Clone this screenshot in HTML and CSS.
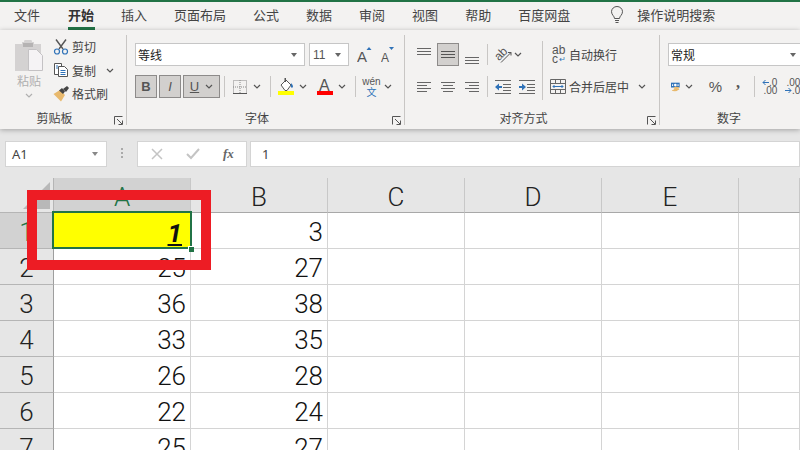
FILE: index.html
```html
<!DOCTYPE html>
<html lang="zh-CN">
<head>
<meta charset="utf-8">
<title>Excel</title>
<link rel="stylesheet" href="styles.css">
</head>
<body>
<div class="app">
  <nav class="tabs">
    <span class="first">文件</span><span class="active">开始</span><span>插入</span><span>页面布局</span><span>公式</span><span>数据</span><span>审阅</span><span>视图</span><span>帮助</span><span>百度网盘</span>
    <svg class="bulb" width="14" height="18" viewBox="0 0 14 18" fill="none" stroke="#555"><path d="M4.5 12.5C4.5 10 1.5 9 1.500 5.700A5.500 5.200 0 0 1 12.500 5.700C12.500 9 9.500 10 9.500 12.500Z"/><path d="M5 14.500H9M5.500 16.500H8.500"/></svg>
    <span class="search">操作说明搜索</span>
  </nav>

  <section class="ribbon">
    <div class="group clip">
      <div class="clip-tools">
        <div class="paste">
          <svg width="30" height="32" viewBox="0 0 30 32"><path fill="#d4d2d2" d="M1 4h7V2h2a4 3 0 0 1 8 0h2v2h7v27H1z"/><path fill="#b5b3b3" d="M9 3h10v4H9z"/><path fill="#f5f3f5" stroke="#c4c2c4" d="M15.500 12.500h8l6 6v15h-14z" transform="translate(-1 -3)"/></svg>
          <span class="paste-label">粘贴</span>
          <svg class="chev" width="8" height="5" viewBox="0 0 8 5" fill="none" stroke="#b0b0b0" stroke-width="1.200"><path d="M1 1l3 3 3-3"/></svg>
        </div>
        <div class="clip-list">
          <div class="clip-item">
            <svg width="16" height="16" viewBox="0 0 16 16" fill="none"><path d="M3 0.500L10 10M13 0.500L6 10" stroke="#555" stroke-width="1.400"/><circle cx="4" cy="12.500" r="2.500" stroke="#2f72b8" stroke-width="1.200"/><circle cx="12" cy="12.500" r="2.500" stroke="#2f72b8" stroke-width="1.200"/></svg>
            <span>剪切</span>
          </div>
          <div class="clip-item">
            <svg width="16" height="16" viewBox="0 0 16 16" fill="#fff" stroke="#555"><path d="M1.500 1.500h7v11h-7z"/><path d="M5.500 4.500h6l3 3v7h-9z"/><path d="M7.500 8.500h5M7.500 10.500h5M7.500 12.500h5M3 4h2M3 6h2" stroke="#2f72b8"/></svg>
            <span>复制</span>
            <svg class="chev copy-chev" width="8" height="5" viewBox="0 0 8 5" fill="none" stroke="#555" stroke-width="1.200"><path d="M1 1l3 3 3-3"/></svg>
          </div>
          <div class="clip-item">
            <svg width="16" height="16" viewBox="0 0 16 16"><path fill="#e8b96d" d="M0.500 8L7 4l5 5-4 6.500z"/><path fill="#444" d="M6 4.500l3-2.500 3 3.500-2 2.500zM10 3l4-3 2 2-3 4z"/></svg>
            <span>格式刷</span>
          </div>
        </div>
      </div>
      <div class="group-label">剪贴板</div>
      <svg class="launcher" width="9" height="9" viewBox="0 0 9 9" fill="none" stroke="#555"><path d="M0.500 8.500V0.500H8.500M3 3l5 5M4.500 8.500h4v-4"/></svg>
    </div>

    <div class="group font">
      <div class="tools">
        <div class="row">
          <div class="select font-name"><span>等线</span><i class="caret"></i></div>
          <div class="select font-size ml4"><span class="size-num">11</span><i class="caret"></i></div>
          <svg class="ml8" width="15" height="18" viewBox="0 0 15 18"><text class="glyph" x="0" y="16" font-size="15">A</text><path fill="#2f72b8" d="M9.500 4L12 1l2.500 3z"/></svg>
          <svg class="ml9" width="14" height="18" viewBox="0 0 14 18"><text class="glyph" x="0" y="16" font-size="12">A</text><path fill="#2f72b8" d="M8 1h5l-2.500 3z"/></svg>
        </div>
        <div class="row">
          <div class="toggle w22"><b>B</b></div>
          <div class="toggle w22 ml2"><em>I</em></div>
          <div class="toggle w37 ml2"><u>U</u><svg class="chev" width="8" height="5" viewBox="0 0 8 5" fill="none" stroke="#555" stroke-width="1.200"><path d="M1 1l3 3 3-3"/></svg></div>
          <i class="sep ml4"></i>
          <svg class="ml8" width="14" height="14" viewBox="0 0 14 14" fill="none" stroke="#888" stroke-dasharray="1 1"><path d="M0.500 0.500h13v13h-13zM7 0v13M0 7h13"/><path d="M0 13.500h14" stroke="#555" stroke-dasharray="none"/></svg>
          <svg class="chev ml6" width="8" height="5" viewBox="0 0 8 5" fill="none" stroke="#555" stroke-width="1.200"><path d="M1 1l3 3 3-3"/></svg>
          <i class="sep ml9"></i>
          <svg class="ml7" width="16" height="18" viewBox="0 0 16 18"><path fill="#fff" stroke="#555" d="M3 7l5-5 5 5-4 5.500H7z"/><path fill="#555" d="M6.500 0h1.500v4H6.500z"/><path fill="#2f72b8" d="M13 5c2 2 2.500 3.500 1.500 4.500S12 9 13 5z"/><path fill="#ff0" d="M0 13h16v4H0z"/></svg>
          <svg class="chev ml5" width="8" height="5" viewBox="0 0 8 5" fill="none" stroke="#555" stroke-width="1.200"><path d="M1 1l3 3 3-3"/></svg>
          <svg class="ml10" width="16" height="18" viewBox="0 0 16 18"><text class="glyph" x="2" y="13" font-size="16">A</text><path fill="#f00" d="M0 13h16v4H0z"/></svg>
          <svg class="chev ml5" width="8" height="5" viewBox="0 0 8 5" fill="none" stroke="#555" stroke-width="1.200"><path d="M1 1l3 3 3-3"/></svg>
          <i class="sep ml9"></i>
          <div class="wen ml7"><span class="wen-top">wén</span><span class="wen-bot">文</span></div>
          <svg class="chev ml4" width="8" height="5" viewBox="0 0 8 5" fill="none" stroke="#555" stroke-width="1.200"><path d="M1 1l3 3 3-3"/></svg>
        </div>
      </div>
      <div class="group-label">字体</div>
      <svg class="launcher" width="9" height="9" viewBox="0 0 9 9" fill="none" stroke="#555"><path d="M0.500 8.500V0.500H8.500M3 3l5 5M4.500 8.500h4v-4"/></svg>
    </div>

    <div class="group align">
      <div class="align-tools">
        <div class="tools align-left">
          <div class="row">
            <svg class="valign-top" width="14" height="8" viewBox="0 0 14 8" stroke="#666"><path d="M0 0.500h14M0 3.500h14M0 6.500h14" transform="translate(0 0)"/></svg>
            <div class="toggle w22 ml6"><svg width="14" height="8" viewBox="0 0 14 8" stroke="#555"><path d="M0 0.500h14M0 3.500h14M0 6.500h14"/></svg></div>
            <svg class="valign-bot ml6" width="14" height="8" viewBox="0 0 14 8" stroke="#666"><path d="M0 0.500h14M0 3.500h14M0 6.500h14"/></svg>
            <i class="sep ml8"></i>
            <svg class="ml7" width="17" height="18" viewBox="0 0 17 18" fill="none" stroke="#555"><text class="glyph-small" x="0" y="12" font-size="12" transform="rotate(-45 6 9)">ab</text><path d="M6 16.500L16 6.500M13 6.500h3v3" stroke="#555"/></svg>
            <svg class="chev ml2" width="8" height="5" viewBox="0 0 8 5" fill="none" stroke="#555" stroke-width="1.200"><path d="M1 1l3 3 3-3"/></svg>
          </div>
          <div class="row">
            <svg width="14" height="10" viewBox="0 0 14 10" stroke="#666"><path d="M0 0.500h14M0 3.500h10M0 6.500h14M0 9.500h10"/></svg>
            <svg class="ml10" width="14" height="10" viewBox="0 0 14 10" stroke="#666"><path d="M0 0.500h14M2 3.500h10M0 6.500h14M2 9.500h10"/></svg>
            <svg class="ml10" width="14" height="10" viewBox="0 0 14 10" stroke="#666"><path d="M0 0.500h14M4 3.500h10M0 6.500h14M4 9.500h10"/></svg>
            <i class="sep ml8"></i>
            <svg class="ml7" width="16" height="14" viewBox="0 0 16 14"><path stroke="#666" d="M0 0.500h16M8 4.500h8M8 7.500h8M8 10.500h8M0 13.500h16"/><path fill="#2f72b8" d="M0 7l4-3.500V6h3v2H4v2.500z"/></svg>
            <svg class="ml8" width="16" height="14" viewBox="0 0 16 14"><path stroke="#666" d="M0 0.500h16M8 4.500h8M8 7.500h8M8 10.500h8M0 13.500h16"/><path fill="#2f72b8" d="M7 7L3 3.500V6H0v2h3v2.500z"/></svg>
          </div>
        </div>
        <i class="sep-tall"></i>
        <div class="tools">
          <div class="row">
            <div class="wrap-icon ml9"><span>ab</span><span class="wrap-c">c<em class="wrap-arrow">↵</em></span></div>
            <span class="tool-text ml4">自动换行</span>
          </div>
          <div class="row">
            <svg class="ml7" width="16" height="15" viewBox="0 0 16 15" fill="none" stroke="#666"><path d="M0.500 0.500h15v14h-15zM0.500 4.500h15M0.500 10.500h15M5.500 0.500v4M10.500 0.500v4M5.500 10.500v4M10.500 10.500v4"/><path stroke="#2f72b8" d="M3 7.500h10M4.500 6L3 7.500 4.500 9M11.500 6L13 7.500 11.500 9"/></svg>
            <span class="tool-text ml3">合并后居中</span>
            <svg class="chev ml9" width="8" height="5" viewBox="0 0 8 5" fill="none" stroke="#555" stroke-width="1.200"><path d="M1 1l3 3 3-3"/></svg>
          </div>
        </div>
      </div>
      <div class="group-label">对齐方式</div>
      <svg class="launcher" width="9" height="9" viewBox="0 0 9 9" fill="none" stroke="#555"><path d="M0.500 8.500V0.500H8.500M3 3l5 5M4.500 8.500h4v-4"/></svg>
    </div>

    <div class="group number">
      <div class="tools">
        <div class="row">
          <div class="select number-format"><span>常规</span><i class="caret"></i></div>
        </div>
        <div class="row">
          <svg class="ml3" width="16" height="16" viewBox="0 0 16 16"><path fill="#2f72b8" d="M0 0h16v9H0z"/><circle cx="8" cy="4.500" r="2.500" fill="#fff"/><path fill="#fff" d="M2 3h2v3H2zM12 3h2v3h-2z"/><ellipse cx="10" cy="9.500" rx="5.500" ry="1.800" fill="#e8b96d"/><ellipse cx="10" cy="12" rx="5.500" ry="1.800" fill="#e8b96d"/><ellipse cx="7" cy="14.500" rx="5.500" ry="1.500" fill="#e8b96d"/></svg>
          <svg class="chev ml5" width="8" height="5" viewBox="0 0 8 5" fill="none" stroke="#555" stroke-width="1.200"><path d="M1 1l3 3 3-3"/></svg>
          <span class="percent">%</span>
          <span class="comma">,</span>
          <i class="sep ml14"></i>
          <div class="dec ml7"><svg width="7" height="7" viewBox="0 0 7 7"><path fill="none" stroke="#2f72b8" d="M7 3.500H1M3.500 1L1 3.500 3.500 6"/></svg><span class="dec-top">.0</span><span class="dec-wide">.00</span></div>
          <div class="dec ml8"><span class="dec-wide">.00</span><svg width="7" height="7" viewBox="0 0 7 7"><path fill="none" stroke="#2f72b8" d="M0 3.500H6M3.500 1L6 3.500 3.500 6"/></svg><span class="dec-top">.0</span></div>
        </div>
      </div>
      <div class="group-label">数字</div>
    </div>
  </section>

  <section class="formula">
    <div class="name-box"><span>A1</span><i class="caret-gray"></i></div>
    <div class="grip"></div>
    <div class="fx-box">
      <svg width="12" height="12" viewBox="0 0 12 12" fill="none" stroke="#c4c4c4" stroke-width="1.500"><path d="M1 1l10 10M11 1L1 11"/></svg>
      <svg width="14" height="12" viewBox="0 0 14 12" fill="none" stroke="#c4c4c4" stroke-width="2"><path d="M1 6l4 4 8-9"/></svg>
      <span class="fx">fx</span>
    </div>
    <div class="formula-input">1</div>
  </section>

  <section class="sheet">
    <div class="corner"><i class="corner-tri"></i></div>
    <div class="col-head picked">A</div>
    <div class="col-head">B</div>
    <div class="col-head">C</div>
    <div class="col-head">D</div>
    <div class="col-head">E</div>
    <div class="col-head"></div>

    <div class="row-head picked">1</div>
    <div class="cell active-cell"><span>1</span><i class="handle"></i></div>
    <div class="cell">3</div><div class="cell"></div><div class="cell"></div><div class="cell"></div><div class="cell"></div>

    <div class="row-head">2</div>
    <div class="cell">25</div><div class="cell">27</div><div class="cell"></div><div class="cell"></div><div class="cell"></div><div class="cell"></div>

    <div class="row-head">3</div>
    <div class="cell">36</div><div class="cell">38</div><div class="cell"></div><div class="cell"></div><div class="cell"></div><div class="cell"></div>

    <div class="row-head">4</div>
    <div class="cell">33</div><div class="cell">35</div><div class="cell"></div><div class="cell"></div><div class="cell"></div><div class="cell"></div>

    <div class="row-head">5</div>
    <div class="cell">26</div><div class="cell">28</div><div class="cell"></div><div class="cell"></div><div class="cell"></div><div class="cell"></div>

    <div class="row-head">6</div>
    <div class="cell">22</div><div class="cell">24</div><div class="cell"></div><div class="cell"></div><div class="cell"></div><div class="cell"></div>

    <div class="row-head">7</div>
    <div class="cell">25</div><div class="cell">27</div><div class="cell"></div><div class="cell"></div><div class="cell"></div><div class="cell"></div>

    <div class="red-frame"></div>
  </section>
</div>
</body>
</html>
```

FILE: styles.css
```css
* { box-sizing: border-box; }
html, body { margin: 0; padding: 0; }
body {
  width: 800px;
  height: 450px;
  overflow: hidden;
  background: #e6e6e6;
  font-family: "Noto Sans CJK SC", "Liberation Sans", sans-serif;
  color: #444;
}
.app { width: 800px; height: 450px; overflow: hidden; display: flex; flex-direction: column; }
i { display: block; font-style: normal; }

/* tabs */
.tabs {
  height: 30px;
  flex: none;
  background: #f3f2f1;
  border-top: 2px solid #217346;
  display: flex;
  align-items: center;
  gap: 27px;
  padding: 0 0 3px 14px;
  font-size: 13px;
  line-height: 18px;
  color: #444;
  white-space: nowrap;
}
.tabs span { position: relative; }
.tabs .first { margin-right: 1px; }
.tabs .active { font-weight: 700; color: #333; }
.tabs .active::after {
  content: "";
  position: absolute;
  left: 0;
  right: -1px;
  bottom: -6px;
  height: 3px;
  background: #217346;
}
.bulb { margin-left: 13px; flex: none; }
.search { margin-left: -14px; }

/* ribbon */
.ribbon {
  height: 99px;
  flex: none;
  background: #f3f2f1;
  display: flex;
  padding-top: 5px;
  box-shadow: 0 1px 5px rgba(0, 0, 0, .3);
  position: relative;
  z-index: 1;
}
.group {
  height: 90px;
  flex: none;
  position: relative;
  display: flex;
  flex-direction: column;
  border-right: 1px solid #c8c6c4;
}
.clip { width: 127px; }
.font { width: 278px; padding-left: 8px; }
.align { width: 255px; padding-left: 12px; }
.number { width: 140px; padding-left: 8px; border-right: 0; overflow: hidden; }
.group-label {
  position: absolute;
  left: 0;
  right: 0;
  top: 74px;
  padding-right: 17px;
  text-align: center;
  font-size: 12px;
  line-height: 18px;
  color: #444;
}
.number .group-label { padding-right: 2px; }
.launcher { position: absolute; right: 3px; bottom: 0; }

.clip-tools { display: flex; padding-left: 11px; height: 72px; }
.paste { width: 36px; display: flex; flex-direction: column; align-items: center; padding-top: 5px; }
.paste-label { font-size: 12px; line-height: 16px; color: #b0b0b0; margin-top: 1px; }
.paste .chev { margin-top: 4px; }
.clip-list { margin-left: 6px; display: flex; flex-direction: column; }
.clip-item { height: 23.500px; display: flex; align-items: center; gap: 3px; font-size: 12px; color: #444; white-space: nowrap; }
.copy-chev { margin-left: 7px; }

.tools { display: flex; flex-direction: column; gap: 9px; padding-top: 8px; }
.row { height: 23px; display: flex; align-items: center; flex: none; white-space: nowrap; }
.select {
  height: 23px;
  background: #fff;
  border: 1px solid #c6c6c6;
  display: flex;
  align-items: center;
  justify-content: space-between;
  padding: 0 4px 0 2px;
  font-size: 12px;
  color: #222;
  flex: none;
}
.font-name { width: 170px; }
.font-size { width: 40px; padding-left: 3px; }
.size-num { font-family: "Liberation Sans", sans-serif; color: #555; font-size: 12px; }
.number-format { width: 136px; }
.caret { width: 0; height: 0; border: 3.500px solid transparent; border-top: 4px solid #666; border-bottom: 0; margin-right: 3px; }
.glyph { font-family: "Liberation Sans", sans-serif; fill: #555; }
.glyph-small { font-family: "Liberation Sans", sans-serif; fill: #555; stroke: none; }
.toggle {
  height: 23px;
  background: #d2d0ce;
  border: 1px solid #8d8b8a;
  display: flex;
  align-items: center;
  justify-content: center;
  gap: 6px;
  font-family: "Liberation Sans", sans-serif;
  font-size: 13px;
  color: #555;
  flex: none;
}
.toggle b, .toggle em, .toggle u { line-height: 1; }
.w22 { width: 22px; }
.w37 { width: 37px; }
.sep { width: 1px; height: 21px; background: #c8c6c4; flex: none; }
.sep-tall { width: 1px; height: 59px; background: #c8c6c4; flex: none; margin-top: 6px; }
.chev { flex: none; }

.ml2 { margin-left: 2px; }
.ml3 { margin-left: 3px; }
.ml4 { margin-left: 4px; }
.ml5 { margin-left: 5px; }
.ml6 { margin-left: 6px; }
.ml7 { margin-left: 7px; }
.ml8 { margin-left: 8px; }
.ml9 { margin-left: 9px; }
.ml10 { margin-left: 10px; }
.ml14 { margin-left: 14px; }

.wen { width: 17px; display: flex; flex-direction: column; align-items: center; flex: none; }
.wen-top { font-family: "Liberation Sans", sans-serif; font-size: 10px; line-height: 10px; color: #555; }
.wen-bot { font-size: 10px; line-height: 10px; color: #2f72b8; }

.align-tools { display: flex; }
.align-left { width: 125px; }
.valign-top { margin-top: -6px; }
.valign-bot { margin-top: 12px; }
.wrap-icon { width: 13px; display: flex; flex-direction: column; font-family: "Liberation Sans", sans-serif; font-size: 12px; line-height: 9px; color: #555; flex: none; }
.wrap-c { display: flex; align-items: center; }
.wrap-arrow { font-style: normal; font-size: 8px; color: #2f72b8; margin-left: 1px; }
.tool-text { font-size: 12px; color: #444; }

.percent { margin-left: 16px; font-family: "Liberation Sans", sans-serif; font-size: 15px; color: #555; width: 14px; }
.comma { margin-left: 14px; font-family: "Liberation Serif", serif; font-weight: 700; font-size: 16px; color: #555; width: 4px; margin-top: -8px; }
.dec {
  width: 15px;
  height: 16px;
  display: grid;
  grid-template-columns: 7px auto;
  font-family: "Liberation Sans", sans-serif;
  font-size: 10px;
  line-height: 8px;
  color: #555;
  align-items: center;
  flex: none;
}
.dec-wide { grid-column: 1 / 3; text-align: right; }
.dec-top { text-align: right; }

/* formula bar */
.formula {
  height: 49px;
  flex: none;
  background: #e6e6e6;
  display: flex;
  padding: 12px 0 11px 5px;
  font-size: 13px;
  font-family: "Noto Sans", sans-serif;
  color: #444;
}
.name-box {
  width: 102px;
  background: #fff;
  border: 1px solid #d4d4d4;
  display: flex;
  align-items: center;
  justify-content: space-between;
  padding: 0 8px 0 6px;
}
.caret-gray { width: 0; height: 0; border: 3.500px solid transparent; border-top: 4px solid #888; border-bottom: 0; }
.grip {
  width: 2px;
  height: 11px;
  margin: 7px 14px 0 14px;
  background: repeating-linear-gradient(#aaa 0 2px, transparent 2px 4px);
}
.fx-box {
  width: 110px;
  background: #fff;
  border: 1px solid #d4d4d4;
  display: flex;
  align-items: center;
  padding-left: 13px;
  gap: 23px;
}
.fx { font-family: "Liberation Serif", serif; font-style: italic; font-weight: 700; font-size: 13px; color: #666; }
.formula-input {
  flex: 1;
  margin-left: 3px;
  background: #fff;
  border: 1px solid #d4d4d4;
  display: flex;
  align-items: center;
  padding-left: 11px;
}

/* sheet */
.sheet {
  position: relative;
  flex: 1;
  display: grid;
  grid-template-columns: 54px 137px 137px 137px 137px 137px 61px;
  grid-template-rows: 35px repeat(7, 36px);
  background: #fff;
  font-family: Roboto, "Liberation Sans", sans-serif;
  font-weight: 300;
  font-size: 26px;
  color: #222;
  overflow: hidden;
}
.corner {
  background: #e6e6e6;
  border-right: 1px solid #b5b5b5;
  border-bottom: 1px solid #b5b5b5;
  position: relative;
}
.corner-tri {
  position: absolute;
  right: 3px;
  bottom: 3px;
  width: 0;
  height: 0;
  border-left: 27px solid transparent;
  border-bottom: 27px solid #b8b8b8;
}
.col-head {
  background: #e6e6e6;
  border-right: 1px solid #c8c8c8;
  border-bottom: 1px solid #a8a8a8;
  display: flex;
  align-items: center;
  justify-content: center;
  padding-top: 4px;
  color: #222;
}
.row-head {
  background: #e6e6e6;
  border-right: 1px solid #9e9e9e;
  border-bottom: 1px solid #b5b5b5;
  display: flex;
  align-items: center;
  justify-content: center;
  padding-top: 3px;
  color: #222;
}
.picked { background: #d2d2d2; color: #217346; }
.cell {
  border-right: 1px solid #d4d4d4;
  border-bottom: 1px solid #d4d4d4;
  display: flex;
  align-items: center;
  justify-content: flex-end;
  padding: 3px 4px 0 0;
  color: #111;
}
.active-cell {
  background: #ff0;
  position: relative;
  z-index: 1;
  border: 0;
  font-style: italic;
  font-weight: 700;
  padding-right: 9px;
  text-decoration: underline;
}
.active-cell::before {
  content: "";
  position: absolute;
  top: -2px;
  left: -2px;
  right: -1px;
  bottom: 0;
  border: 2px solid #217346;
}
.handle {
  position: absolute;
  right: -3px;
  bottom: -3px;
  width: 6px;
  height: 6px;
  background: #217346;
  border: 1px solid #fff;
  border-width: 1px 0 0 1px;
}
.red-frame {
  position: absolute;
  left: 27px;
  top: 12px;
  width: 184px;
  height: 80px;
  border: 10px solid #ed1c24;
  z-index: 2;
}
```
